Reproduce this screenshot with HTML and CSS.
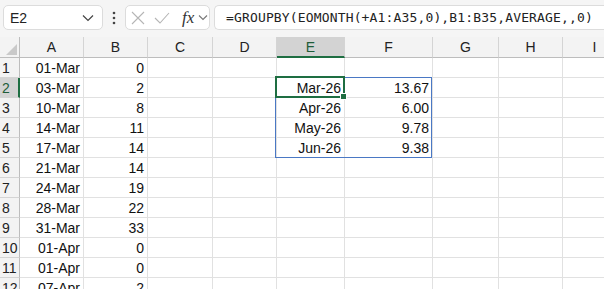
FILE: index.html
```html
<!DOCTYPE html>
<html lang="en">
<head>
    <meta charset="UTF-8">
    <title>GROUPBY by month</title>
    <link rel="stylesheet" href="styles.css">
</head>
<body>
    <div class="toolbar">
        <div class="namebox">
            <span>E2</span>
            <svg width="12" height="8" viewBox="0 0 12 8"><path d="M1 1.5 L6 6.5 L11 1.5" fill="none" stroke="#444" stroke-width="1.2"/></svg>
        </div>
        <div class="dots">
            <svg width="4" height="14" viewBox="0 0 4 14"><circle cx="2" cy="2" r="1.3" fill="#444"/><circle cx="2" cy="7" r="1.3" fill="#444"/><circle cx="2" cy="12" r="1.3" fill="#444"/></svg>
        </div>
        <div class="fxbox">
            <svg width="14" height="14" viewBox="0 0 14 14"><path d="M1 1 L13 13 M13 1 L1 13" stroke="#b5b5b5" stroke-width="1.1"/></svg>
            <svg width="16" height="14" viewBox="0 0 16 14"><path d="M1 7 L6 12 L15 2" fill="none" stroke="#b5b5b5" stroke-width="1.1"/></svg>
            <span class="fx">fx</span>
            <svg width="10" height="7" viewBox="0 0 10 7"><path d="M1 1.5 L5 5.5 L9 1.5" fill="none" stroke="#777" stroke-width="1.1"/></svg>
        </div>
        <div class="formula">=GROUPBY(EOMONTH(+A1:A35,0),B1:B35,AVERAGE,,0)</div>
    </div>

    <div class="sheet">
        <div class="grid">
            <div class="hd corner"></div>
            <div class="hd">A</div><div class="hd">B</div><div class="hd">C</div><div class="hd">D</div>
            <div class="hd active">E</div><div class="hd">F</div><div class="hd">G</div><div class="hd">H</div><div class="hd">I</div>

            <div class="rh">1</div><div class="c">01-Mar</div><div class="c">0</div><div class="c"></div><div class="c"></div><div class="c"></div><div class="c"></div><div class="c"></div><div class="c"></div><div class="c"></div>
            <div class="rh active">2</div><div class="c">03-Mar</div><div class="c">2</div><div class="c"></div><div class="c"></div><div class="c">Mar-26</div><div class="c">13.67</div><div class="c"></div><div class="c"></div><div class="c"></div>
            <div class="rh">3</div><div class="c">10-Mar</div><div class="c">8</div><div class="c"></div><div class="c"></div><div class="c">Apr-26</div><div class="c">6.00</div><div class="c"></div><div class="c"></div><div class="c"></div>
            <div class="rh">4</div><div class="c">14-Mar</div><div class="c">11</div><div class="c"></div><div class="c"></div><div class="c">May-26</div><div class="c">9.78</div><div class="c"></div><div class="c"></div><div class="c"></div>
            <div class="rh">5</div><div class="c">17-Mar</div><div class="c">14</div><div class="c"></div><div class="c"></div><div class="c">Jun-26</div><div class="c">9.38</div><div class="c"></div><div class="c"></div><div class="c"></div>
            <div class="rh">6</div><div class="c">21-Mar</div><div class="c">14</div><div class="c"></div><div class="c"></div><div class="c"></div><div class="c"></div><div class="c"></div><div class="c"></div><div class="c"></div>
            <div class="rh">7</div><div class="c">24-Mar</div><div class="c">19</div><div class="c"></div><div class="c"></div><div class="c"></div><div class="c"></div><div class="c"></div><div class="c"></div><div class="c"></div>
            <div class="rh">8</div><div class="c">28-Mar</div><div class="c">22</div><div class="c"></div><div class="c"></div><div class="c"></div><div class="c"></div><div class="c"></div><div class="c"></div><div class="c"></div>
            <div class="rh">9</div><div class="c">31-Mar</div><div class="c">33</div><div class="c"></div><div class="c"></div><div class="c"></div><div class="c"></div><div class="c"></div><div class="c"></div><div class="c"></div>
            <div class="rh">10</div><div class="c">01-Apr</div><div class="c">0</div><div class="c"></div><div class="c"></div><div class="c"></div><div class="c"></div><div class="c"></div><div class="c"></div><div class="c"></div>
            <div class="rh">11</div><div class="c">01-Apr</div><div class="c">0</div><div class="c"></div><div class="c"></div><div class="c"></div><div class="c"></div><div class="c"></div><div class="c"></div><div class="c"></div>
            <div class="rh">12</div><div class="c">07-Apr</div><div class="c">2</div><div class="c"></div><div class="c"></div><div class="c"></div><div class="c"></div><div class="c"></div><div class="c"></div><div class="c"></div>
        </div>
        <div class="spill"></div>
        <div class="selection"><div class="handle"></div></div>
    </div>
</body>
</html>
```

FILE: styles.css
```css
body {
    margin: 0;
    background: #ffffff;
    font-family: "Liberation Sans", Arial, sans-serif;
    overflow: hidden;
}

/* formula bar */
.toolbar {
    height: 37px;
    background: #f5f5f5;
    display: flex;
    align-items: flex-start;
    padding-top: 5px;
    box-sizing: border-box;
}
.namebox {
    margin-left: 3px;
    width: 100px;
    height: 25px;
    box-sizing: border-box;
    background: #fff;
    border: 1px solid #dcdcdc;
    border-radius: 5px;
    display: flex;
    align-items: center;
    justify-content: space-between;
    padding: 0 8px 0 6px;
    font-size: 14px;
    color: #222;
}
.dots {
    width: 22px;
    height: 25px;
    display: flex;
    align-items: center;
    justify-content: center;
}
.fxbox {
    width: 85px;
    height: 25px;
    box-sizing: border-box;
    background: #fff;
    border: 1px solid #dcdcdc;
    border-radius: 5px;
    display: flex;
    align-items: center;
    padding-left: 5px;
    gap: 9px;
}
.fxbox .fx {
    font-family: "Liberation Serif", "Times New Roman", serif;
    font-style: italic;
    font-size: 17px;
    color: #333;
    margin-left: 3px;
    margin-right: -5px;
}
.formula {
    margin-left: 4px;
    flex: 1;
    height: 25px;
    box-sizing: border-box;
    background: #fff;
    border: 1px solid #dcdcdc;
    border-right: none;
    border-radius: 5px 0 0 5px;
    font-family: "DejaVu Sans Mono", monospace;
    font-size: 13px;
    letter-spacing: 0.15px;
    color: #222;
    line-height: 23px;
    padding-left: 11px;
    white-space: nowrap;
}

/* sheet */
.sheet {
    position: relative;
}
.grid {
    display: grid;
    grid-template-columns: 20px 64px 64px 65px 64px 68px 88px 66px 64px 64px;
    grid-template-rows: 21px;
    grid-auto-rows: 20px;
}
.hd {
    background: #f3f3f3;
    border-right: 1px solid #d4d4d4;
    border-bottom: 1px solid #bdbdbd;
    font-size: 14px;
    color: #222;
    text-align: center;
    line-height: 21px;
}
.hd.corner {
    position: relative;
    border-right: 1px solid #bdbdbd;
}
.hd.corner::after {
    content: "";
    position: absolute;
    right: 2px;
    bottom: 2px;
    border-left: 11px solid transparent;
    border-bottom: 11px solid #c9c9c9;
}
.hd.active {
    background: #d3d3d3;
    border-bottom: 2px solid #1e6e42;
    color: #1e5c38;
    line-height: 20px;
}
.rh {
    background: #f3f3f3;
    border-right: 1px solid #bdbdbd;
    border-bottom: 1px solid #d4d4d4;
    font-size: 14px;
    color: #222;
    line-height: 20px;
    padding-left: 2px;
}
.rh.active {
    background: #d3d3d3;
    border-right: 2px solid #1e6e42;
    color: #1e5c38;
}
.c {
    border-right: 1px solid #e1e1e1;
    border-bottom: 1px solid #e1e1e1;
    font-size: 14px;
    color: #111;
    text-align: right;
    line-height: 20px;
    padding-right: 3px;
    white-space: nowrap;
    overflow: hidden;
}

/* overlays */
.spill {
    position: absolute;
    left: 275px;
    top: 40px;
    width: 157px;
    height: 81px;
    border: 1px solid #4a78c4;
    box-sizing: border-box;
    pointer-events: none;
}
.selection {
    position: absolute;
    left: 275px;
    top: 39px;
    width: 70px;
    height: 22px;
    border: 2px solid #1e6e42;
    box-sizing: border-box;
    pointer-events: none;
}
.handle {
    position: absolute;
    right: -4px;
    bottom: -4px;
    width: 5px;
    height: 5px;
    background: #1e6e42;
    border: 1px solid #fff;
}
```
